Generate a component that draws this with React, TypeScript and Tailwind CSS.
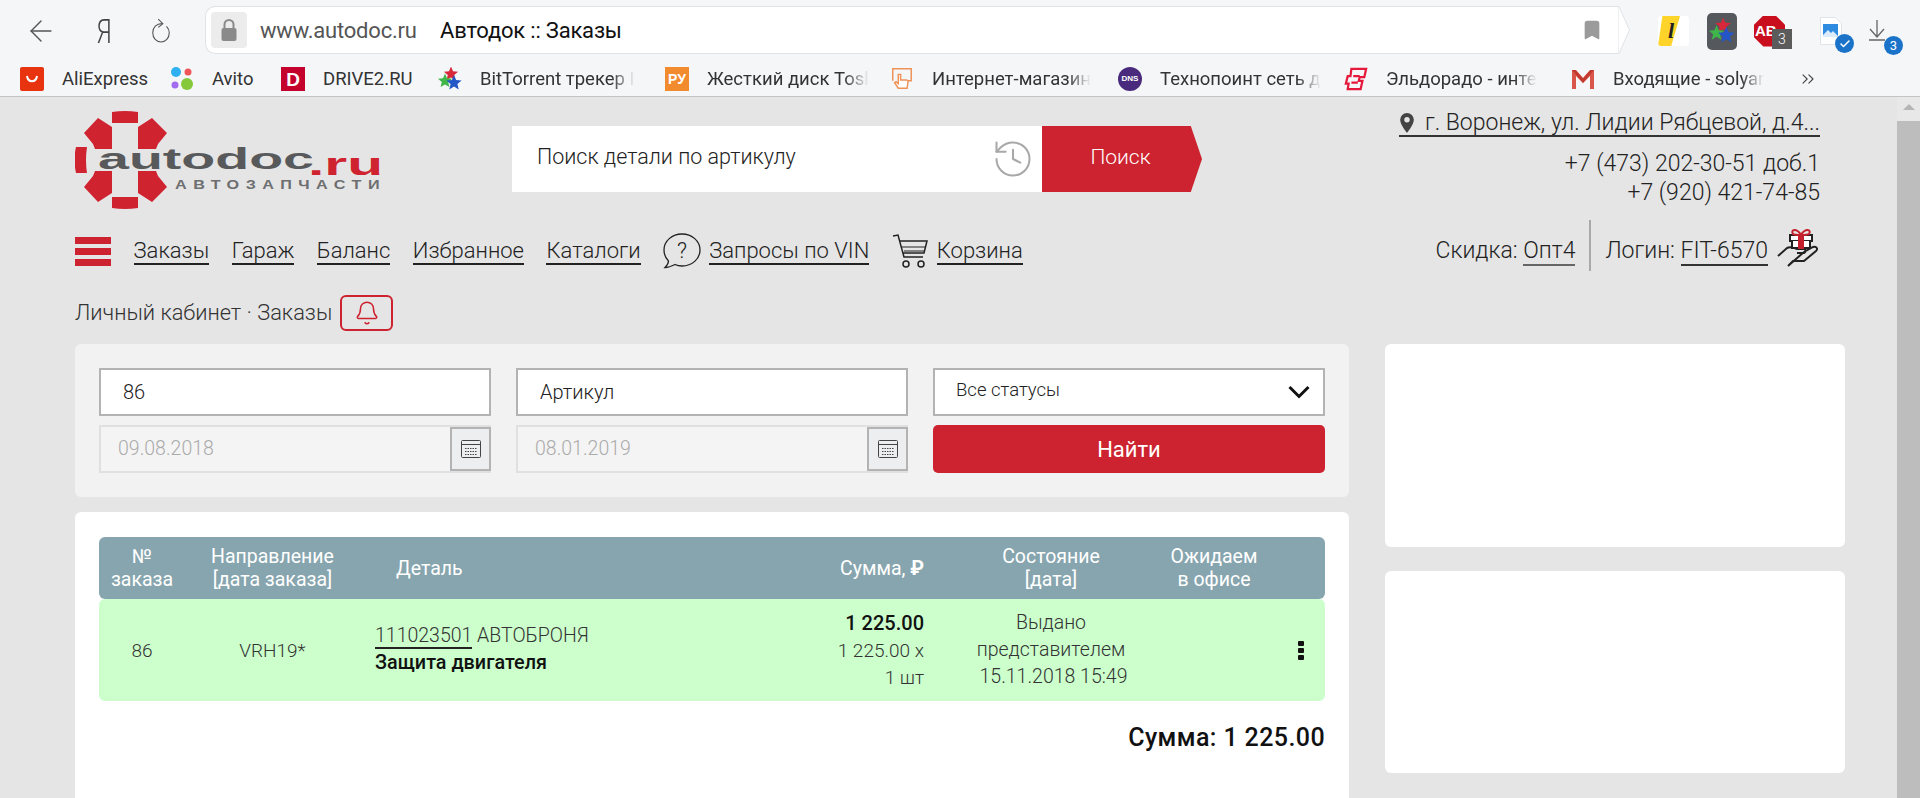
import { ChevronsRight, Bell, History, Bookmark, ArrowLeft, Check } from 'lucide-react';

const bookmarks = [
  { name: 'AliExpress', width: 'w-[150px]', icon: 'ali' },
  { name: 'Avito', width: 'w-[111px]', icon: 'avito' },
  { name: 'DRIVE2.RU', width: 'w-[157px]', icon: 'drive' },
  { name: 'BitTorrent трекер I', width: 'w-[227px]', icon: 'stars', fade: true },
  { name: 'Жесткий диск Tosl', width: 'w-[225px]', icon: 'ru', fade: true },
  { name: 'Интернет-магазин', width: 'w-[228px]', icon: 'hand', fade: true },
  { name: 'Технопоинт сеть д', width: 'w-[226px]', icon: 'dns', fade: true },
  { name: 'Эльдорадо - инте', width: 'w-[227px]', icon: 'eld', fade: true },
  { name: 'Входящие - solyar', width: 'w-[227px]', icon: 'gmail', fade: true },
];

const navLinks = [
  { name: 'Гараж' },
  { name: 'Баланс' },
  { name: 'Избранное' },
  { name: 'Каталоги' },
];

// five pointed star for the BitTorrent bookmark
const starPoints = (cx: number, cy: number, r: number) =>
  Array.from({ length: 10 }, (_, i) => {
    const radius = i % 2 === 0 ? r : r * 0.45;
    const angle = (Math.PI / 5) * i - Math.PI / 2;
    return `${cx + radius * Math.cos(angle)},${cy + radius * Math.sin(angle)}`;
  }).join(' ');

const Stars = ({ className }: { className?: string }) => (
  <svg viewBox="0 0 24 24" className={className}>
    <polygon points={starPoints(13, 7, 7.5)} fill="#d8283a" />
    <polygon points={starPoints(7, 14, 7.5)} fill="#3fb54a" />
    <polygon points={starPoints(16, 16, 8)} fill="#2456c8" />
  </svg>
);

const BookmarkIcon = ({ type }: { type: string }) => {
  switch (type) {
    case 'ali':
      return (
        <svg viewBox="0 0 24 24" className="w-6 h-6">
          <rect x="0" y="0" width="24" height="24" rx="2" fill="#e8330f" />
          <path d="M7 9c1 7 9 7 10 0" fill="none" stroke="#fff" strokeWidth="2" />
        </svg>
      );
    case 'avito':
      return (
        <svg viewBox="0 0 24 24" className="w-6 h-6">
          <circle cx="6" cy="5" r="5" fill="#2fb0f0" />
          <circle cx="18" cy="5" r="3.500" fill="#f0555a" />
          <circle cx="5" cy="18" r="3.500" fill="#a26cf0" />
          <circle cx="17" cy="17" r="6" fill="#86c83c" />
        </svg>
      );
    case 'drive':
      return (
        <div className="w-6 h-6 bg-[#c4002d] flex items-center justify-center text-white font-bold text-[19px] leading-none [font-family:'Liberation_Sans',sans-serif]">
          D
        </div>
      );
    case 'stars':
      return <Stars className="w-6 h-6" />;
    case 'ru':
      return (
        <div className="w-6 h-6 bg-[#f28a2e] flex items-center justify-center text-white font-bold text-[14px] leading-none [font-family:'Liberation_Sans',sans-serif]">
          РУ
        </div>
      );
    case 'hand':
      return (
        <svg viewBox="0 0 26 26" className="w-6 h-6" fill="none" stroke="#ee9257" strokeWidth="1.600">
          <path d="M3 15V2h20v13h-6" />
          <path d="M9 23l-4-6 1.500-1 2.500 2V8h2.500v6h6.500c1 0 1.500 1 1.500 2l-1 7z" fill="#fff" />
        </svg>
      );
    case 'dns':
      return (
        <div className="w-6 h-6 rounded-full bg-[#4a2a7d] flex items-center justify-center text-white font-bold text-[8px] leading-none [font-family:'Liberation_Sans',sans-serif]">
          DNS
        </div>
      );
    case 'eld':
      return (
        <svg viewBox="0 0 26 26" className="w-6 h-6" fill="none" stroke="#e5193c" strokeWidth="2.400">
          <path d="M8 2h16l-2 9h-5l-1 4h4l-2 9H4l1-6H2l2-8h3z" />
          <path d="M10 10h7M8 17h7" />
        </svg>
      );
    default:
      return (
        <svg viewBox="0 0 24 24" className="w-6 h-6">
          <path d="M1 3h4l7 8 7-8h4v19h-4V9l-7 7-7-7v13H1z" fill="#d9574a" />
          <path d="M1 3h3.500l7.500 8.500L19.500 3H23L12 16z" fill="#c23a2d" />
        </svg>
      );
  }
};

const BrowserChrome = () => (
  <header className="bg-[#f5f6f8] border-b border-[#c4c4c4] h-[97px] shrink-0 text-[#333] [font-family:Roboto,sans-serif]">
    <div className="h-[62px] flex items-center relative">
      <ArrowLeft className="ml-[24px] w-[34px] h-[34px] text-[#555]" strokeWidth={1} />
      <span className="ml-[36px] w-[20px] text-center text-[33px] font-light leading-none text-[#444] scale-x-75">Я</span>
      <svg viewBox="0 0 24 28" className="ml-[36px] w-[22px] h-[28px]" fill="none" stroke="#555" strokeWidth="1.200">
        <path d="M13 6C7 6 3 10 3 16s4 10 9 10 9-4 9-10c0-3-1-5-3-7" />
        <path d="M9 1l5 5-5 4" />
      </svg>

      {/* address bar */}
      <div className="ml-[33px] flex items-stretch h-[48px] relative top-[-1px]">
        <div className="w-[1413px] bg-white border border-r-0 border-[#e0e2e6] rounded-l-[10px] flex items-center pl-[5px]">
          <div className="w-[36px] h-[36px] rounded bg-[#ececec] flex items-center justify-center">
            <svg viewBox="0 0 18 24" className="w-[18px] h-[24px]">
              <path d="M4.500 11V6.500a4.500 4.500 0 0 1 9 0V11" fill="none" stroke="#8a8a8a" strokeWidth="2" />
              <rect x="1.500" y="10" width="15" height="13" rx="2" fill="#8a8a8a" />
            </svg>
          </div>
          <span className="ml-[13px] w-[180px] text-[22px] text-[#555] tracking-[-0.2px]">www.autodoc.ru</span>
          <span className="text-[22px] text-[#111] tracking-[-0.2px]">Автодок :: Заказы</span>
          <Bookmark className="ml-auto mr-[15px] w-[22px] h-[26px] text-[#9b9b9b]" fill="#9b9b9b" />
        </div>
        <svg viewBox="0 0 12 48" className="w-[12px] h-[48px]">
          <path d="M0 .5h1L11.500 24 1 47.500H0z" fill="#fff" stroke="#e0e2e6" />
        </svg>
      </div>

      {/* extensions */}
      <div className="ml-[28px] w-[31px] h-[30px] bg-white rounded-[3px] relative overflow-hidden">
        <div className="absolute left-0 top-0 w-[22px] h-[30px] bg-[#fed42b] [clip-path:polygon(20%_0,100%_0,60%_100%,0_100%)]" />
        <span className="absolute left-[10px] top-[2px] text-[22px] leading-[26px] italic font-bold text-[#222] [font-family:'Liberation_Serif',serif]">l</span>
      </div>
      <div className="ml-[18px] w-[30px] h-[37px] rounded-[5px] bg-[#55585c] flex items-center justify-center">
        <Stars className="w-[26px] h-[26px]" />
      </div>
      <div className="ml-[17px] w-[31px] h-[31px] relative">
        <div className="w-full h-full bg-[#c90f1e] [clip-path:polygon(30%_0,70%_0,100%_30%,100%_70%,70%_100%,30%_100%,0_70%,0_30%)] flex items-center pl-[1px] text-white font-bold text-[15px] [font-family:'Liberation_Sans',sans-serif]">
          AB
        </div>
        <span className="absolute right-[-7px] bottom-[-2px] w-[20px] h-[20px] bg-[#5b5b5b] text-white text-[14px] leading-[20px] text-center font-light">3</span>
      </div>
      <div className="ml-[35px] w-[22px] h-[28px] relative">
        <svg viewBox="0 0 22 28" className="w-[22px] h-[28px]">
          <path d="M.5.5h15l6 6v21H.5z" fill="#fff" stroke="#dfe4ea" />
          <rect x="3" y="7" width="15" height="13" fill="#2f8be0" />
          <path d="M3 18l5-5 3 3 2-2 5 5v1H3z" fill="#dcecfa" />
        </svg>
        <span className="absolute left-[15px] top-[17px] w-[19px] h-[19px] rounded-full bg-[#1a73c9] flex items-center justify-center">
          <Check className="w-[12px] h-[12px] text-white" strokeWidth={3} />
        </span>
      </div>
      <div className="ml-[24px] w-[24px] h-[40px] relative">
        <svg viewBox="0 0 24 40" className="w-[24px] h-[40px]" fill="none" stroke="#666" strokeWidth="1.300">
          <path d="M11 9v17M4 18l7 8 7-8M3 29h16" />
        </svg>
        <span className="absolute left-[18px] top-[25px] w-[19px] h-[19px] rounded-full bg-[#1a73c9] text-white text-[13px] leading-[19px] text-center">3</span>
      </div>
    </div>

    <div className="h-[34px] flex items-center pl-[20px] text-[18.500px] text-[#333]">
      {bookmarks.map((b) => (
        <div key={b.name} className={`${b.width} shrink-0 flex items-center`}>
          <span className="shrink-0">
            <BookmarkIcon type={b.icon} />
          </span>
          <span
            className={`ml-[18px] mt-[2px] whitespace-nowrap ${
              b.fade ? '[mask-image:linear-gradient(to_right,black_85%,transparent)]' : ''
            }`}
          >
            {b.name}
          </span>
        </div>
      ))}
      <ChevronsRight className="w-[20px] h-[20px] text-[#444]" strokeWidth={1.300} />
    </div>
  </header>
);

const Logo = () => (
  <svg viewBox="0 0 310 100" className="w-[310px] h-[100px] block">
    <g fill="#cf2330">
      <path d="M37 2q13-2 26 0v11H37z" />
      <path d="M37 87h26v11q-13 2-26 0z" />
      <path d="M1 37h11q-2 13 0 26H1q-3-13 0-26z" />
      <path d="M9 23L23 8l14 9v22H20L18 34z" />
      <path d="M63 17l14-9 15 15-9 11-2 5H63z" />
      <path d="M9 77l9-11 2-5h17v22l-14 9z" />
      <path d="M63 61h18l2 5 9 11-15 15-14-9z" />
    </g>
    <text x="23" y="59" fontSize="29" fontWeight="700" fill="#58595b" textLength="216" lengthAdjust="spacingAndGlyphs" fontFamily="Liberation Sans, sans-serif">
      autodoc
    </text>
    <text x="233" y="65" fontSize="31" fontWeight="700" fill="#cf2330" textLength="75" lengthAdjust="spacingAndGlyphs" fontFamily="Liberation Sans, sans-serif">
      .ru
    </text>
    <text x="100" y="79" fontSize="12.500" fontWeight="700" letterSpacing="5" fill="#6d6e70" textLength="211" lengthAdjust="spacingAndGlyphs" fontFamily="Liberation Sans, sans-serif">
      АВТОЗАПЧАСТИ
    </text>
  </svg>
);

const CalendarButton = () => (
  <div className="w-[41px] h-full shrink-0 border-2 border-[#b3b3b3] bg-[#eceef0] flex items-center justify-center">
    <svg viewBox="0 0 20 18" className="w-[20px] h-[18px]" fill="none" stroke="#444" strokeWidth="1">
      <rect x="0.500" y="0.500" width="19" height="17" rx="1" />
      <path d="M1 4.500h18" />
      <path d="M4 8.500h12M4 11.500h12M4 14.500h12" strokeDasharray="1.500 1" />
    </svg>
  </div>
);

const DateField = ({ value }: { value: string }) => (
  <div className="h-[48px] flex border-2 border-[#e0e0e0] border-r-0 bg-[#f4f4f4] items-stretch">
    <span className="flex-1 pl-[17px] self-center text-[19.500px] text-[#ababab]">{value}</span>
    <CalendarButton />
  </div>
);

const FilterCard = () => (
  <section className="bg-[#f2f2f2] rounded-[6px] h-[153px] px-[24px] pt-[24px] grid grid-cols-3 gap-x-[25px] gap-y-[9px] auto-rows-[48px]">
    <div className="border-2 border-[#b3b3b3] bg-white flex items-center pl-[22px] text-[20px] text-[#222]">86</div>
    <div className="border-2 border-[#b3b3b3] bg-white flex items-center pl-[22px] text-[20px] text-[#222]">Артикул</div>
    <div className="border-2 border-[#b3b3b3] bg-white flex items-center justify-between pl-[21px] pr-[13px] text-[18.500px] text-[#222]">
      <span className="-mt-[2px]">Все статусы</span>
      <svg viewBox="0 0 22 14" className="w-[22px] h-[14px]" fill="none" stroke="#111" strokeWidth="3">
        <path d="M1.500 2L11 11.500 20.500 2" />
      </svg>
    </div>
    <DateField value="09.08.2018" />
    <DateField value="08.01.2019" />
    <button className="bg-[#cd2330] rounded-[5px] text-white text-[22px] font-normal">Найти</button>
  </section>
);

const tableCols = 'grid grid-cols-[86px_175px_564px_25px_204px_122px_50px]';

const OrdersCard = () => (
  <section className="bg-white rounded-t-[6px] flex-1 mt-[15px] px-[24px] pt-[25px]">
    <div className={`${tableCols} h-[62px] items-center rounded-[6px] bg-[#87a5ae] text-white text-[19.500px] leading-[23px] text-center font-normal`}>
      <div>
        №<br />заказа
      </div>
      <div>
        Направление<br />[дата заказа]
      </div>
      <div className="text-left pl-[36px] flex items-center justify-between pr-0">
        <span>Деталь</span>
        <span className="flex items-center">
          Сумма,&nbsp;<span className="font-bold">₽</span>
        </span>
      </div>
      <div />
      <div>
        Состояние<br />[дата]
      </div>
      <div>
        Ожидаем<br />в офисе
      </div>
      <div />
    </div>
    <div className={`${tableCols} h-[102px] items-center rounded-[6px] bg-[#ccffcc] text-[#333] text-[19px] leading-[27px] text-center`}>
      <div>86</div>
      <div>VRH19*</div>
      <div className="text-left pl-[15px] flex items-center justify-between">
        <div className="-mt-[3px]">
          <div className="text-[19.500px]">
            <span className="border-b-2 border-[#222]">111023501</span> АВТОБРОНЯ
          </div>
          <div className="font-medium text-[19.800px] text-[#111]">Защита двигателя</div>
        </div>
        <div className="text-right">
          <div className="font-medium text-[20px] text-[#111]">1 225.00</div>
          <div>1 225.00 x</div>
          <div>1 шт</div>
        </div>
      </div>
      <div />
      <div className="text-[19.500px] -mt-[1px]">
        Выдано<br />представителем<br /><span className="pl-[5px]">15.11.2018 15:49</span>
      </div>
      <div />
      <div className="flex flex-col items-center gap-[2px] pl-[2px]">
        <span className="w-[6px] h-[5px] rounded-[1px] bg-[#111]" />
        <span className="w-[6px] h-[5px] rounded-[1px] bg-[#111]" />
        <span className="w-[6px] h-[5px] rounded-[1px] bg-[#111]" />
      </div>
    </div>
    <div className="text-right text-[25px] font-medium text-[#111] mt-[18px] tracking-[0.4px]">Сумма: 1 225.00</div>
  </section>
);

const ContactColumn = () => (
  <div className="mr-[25px] flex flex-col items-end text-[#222]">
    <div className="h-[27px] border-b-2 border-[#333] flex items-center text-[23px] leading-none">
      <svg viewBox="0 0 16 22" className="w-[16px] h-[20px] mr-[10px]">
        <path fillRule="evenodd" d="M8 0a7.500 7.500 0 0 1 7.500 7.500C15.500 13 8 22 8 22S.5 13 .5 7.500A7.500 7.500 0 0 1 8 0zm0 4.500a3 3 0 1 0 0 6 3 3 0 0 0 0-6z" fill="#444" />
      </svg>
      г. Воронеж, ул. Лидии Рябцевой, д.4...
    </div>
    <div className="mt-[12px] text-[23px] leading-[29px] text-right">
      +7 (473) 202-30-51 доб.1<br />+7 (920) 421-74-85
    </div>
    <div className="mt-[13px] h-[51px] flex items-center text-[23px]">
      <span className="mt-[10px] leading-[28px]">
        Скидка: <span className="border-b-2 border-[#666]">Опт4</span>
      </span>
      <span className="w-[2px] h-[51px] bg-[#a9a9a9] mx-[14px]" />
      <span className="mt-[10px] leading-[28px]">
        Логин: <span className="border-b-2 border-[#333]">FIT-6570</span>
      </span>
      <svg viewBox="0 0 44 42" className="w-[44px] h-[42px] ml-[8px] mt-[2px]" fill="none" stroke="#222" strokeWidth="2">
        <path d="M2 30l9-8c4-2 7 0 10 1h7c2 0 2 3 0 4h-7M28 26l9-5c4-1 5 2 3 4l-12 10H17l-5 5z" fill="#e5e5e5" />
        <rect x="14" y="9" width="22" height="6" fill="#fff" />
        <path d="M16 15v7h18v-7" fill="#fff" />
        <rect x="22" y="9" width="6" height="14" fill="#c4202d" stroke="none" />
        <path d="M25 9c-4-7-11-6-8-1 1 1 5 1 8 1zM25 9c4-7 11-6 8-1-1 1-5 1-8 1z" stroke="#c4202d" strokeWidth="2" />
      </svg>
    </div>
  </div>
);

const SiteHeader = () => (
  <div className="flex justify-between pt-[13px] h-[182px]">
    <div>
      <div className="flex">
        <Logo />
        <div className="ml-[127px] mt-[16px] flex h-[66px] w-[690px]">
          <div className="w-[530px] bg-white flex items-center justify-between pl-[25px] pr-[7px] text-[21.500px] text-[#222]">
            <span className="-mt-[3px]">Поиск детали по артикулу</span>
            <History className="w-[44px] h-[44px] text-[#a8a8a8]" strokeWidth={1.100} />
          </div>
          <div className="w-[160px] bg-[#cd2330] text-white text-[21px] flex items-center justify-center pb-[2px] [clip-path:polygon(0_0,93%_0,100%_50%,93%_100%,0_100%)]">
            <span className="mr-[3px]">Поиск</span>
          </div>
        </div>
      </div>
      <nav className="mt-[21px] flex items-center h-[40px] text-[22px] text-[#222] gap-[22.500px]">
        <div className="w-[36px] flex flex-col gap-[4px]">
          <span className="h-[7px] bg-[#cd2330]" />
          <span className="h-[7px] bg-[#cd2330]" />
          <span className="h-[7px] bg-[#cd2330]" />
        </div>
        <a className="border-b-2 border-[#222] leading-[25px]">Заказы</a>
        {navLinks.map((l) => (
          <a key={l.name} className="border-b-2 border-[#222] leading-[25px]">
            {l.name}
          </a>
        ))}
        <span className="flex items-center">
          <svg viewBox="0 0 38 36" className="w-[38px] h-[36px] mr-[8px]" fill="none" stroke="#222" strokeWidth="1.300">
            <path d="M19 1c10 0 18 7 18 16s-8 16-18 16c-3 0-5-.5-7-1.500C9 33 6 34.500 2 34.500c2-2 3.500-4 3.500-6.500C2.500 25 1 21.500 1 17 1 8 9 1 19 1z" />
            <text x="19" y="25" textAnchor="middle" fontSize="22" fontWeight="300" fill="#222" stroke="none" fontFamily="Roboto, sans-serif">?</text>
          </svg>
          <a className="border-b-2 border-[#222] leading-[25px]">Запросы по VIN</a>
        </span>
        <span className="flex items-center">
          <svg viewBox="0 0 36 36" className="w-[36px] h-[36px] mr-[9px]" fill="none" stroke="#222" strokeWidth="1.500">
            <path d="M1 3l5-1 6 22h19" />
            <path d="M8 8h27l-3 12H11" />
            <path d="M9.500 14h23.500M12 18h20" strokeWidth="1" />
            <circle cx="14" cy="31" r="3" />
            <circle cx="29" cy="31" r="3" />
          </svg>
          <a className="border-b-2 border-[#222] leading-[25px]">Корзина</a>
        </span>
      </nav>
    </div>
    <ContactColumn />
  </div>
);

const Scrollbar = () => (
  <aside className="w-[23px] shrink-0 bg-[#e8e8e8] flex flex-col items-center">
    <div className="mt-[7px] w-0 h-0 border-x-[6px] border-x-transparent border-b-[6px] border-b-[#b5b5b5]" />
    <div className="mt-[11px] flex-1 w-full bg-[#bdbdbd]" />
  </aside>
);

export default function App() {
  return (
    <div className="h-[798px] w-[1920px] flex flex-col overflow-hidden bg-[#e5e5e5]">
      <BrowserChrome />
      <main className="flex-1 flex min-h-0 [font-family:Roboto,sans-serif] font-light">
        <div className="flex-1 flex flex-col pl-[75px] pr-[52px] min-w-0">
          <SiteHeader />
          <div className="mt-[16px] h-[36px] flex items-center text-[21.800px] text-[#333]">
            Личный кабинет · Заказы
            <span className="ml-[8px] w-[53px] h-[36px] rounded-[6px] border-2 border-[#cd2330] flex items-center justify-center">
              <Bell className="w-[26px] h-[26px] text-[#cd2330]" strokeWidth={1.400} />
            </span>
          </div>
          <div className="mt-[13px] flex-1 flex gap-[36px] min-h-0">
            <div className="w-[1274px] flex flex-col">
              <FilterCard />
              <OrdersCard />
            </div>
            <div className="w-[460px] flex flex-col gap-[24px]">
              <div className="h-[203px] bg-white rounded-[6px]" />
              <div className="h-[202px] bg-white rounded-[6px]" />
            </div>
          </div>
        </div>
        <Scrollbar />
      </main>
    </div>
  );
}
